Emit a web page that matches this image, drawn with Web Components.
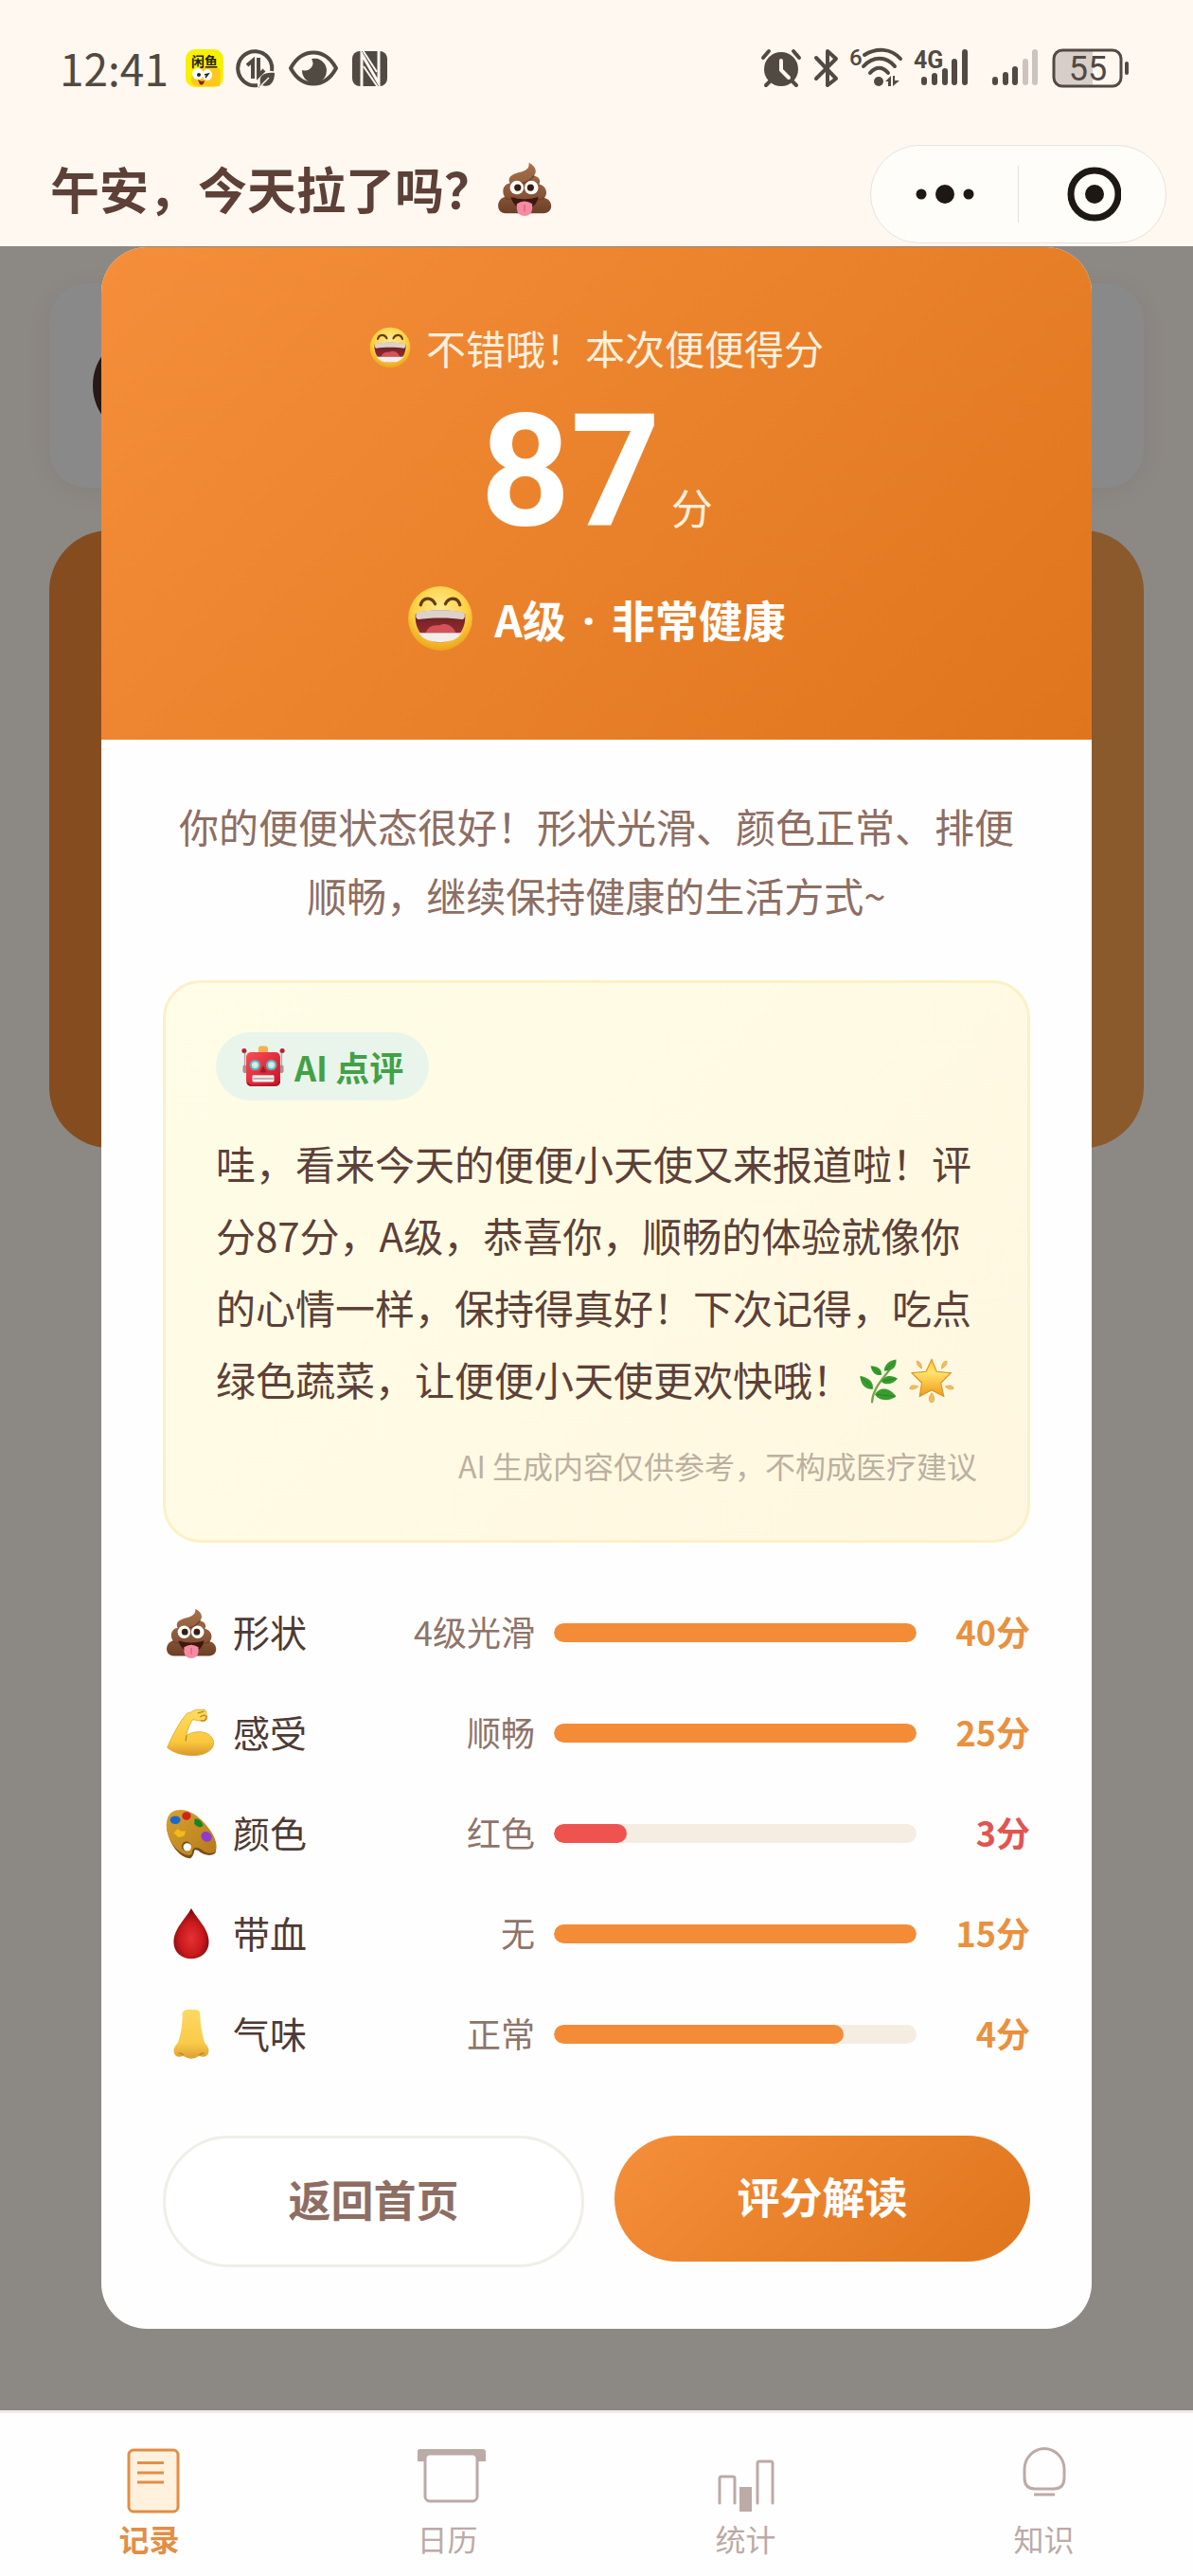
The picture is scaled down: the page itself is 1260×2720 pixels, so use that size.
<!DOCTYPE html>
<html lang="zh-CN">
<head>
<meta charset="utf-8">
<meta name="viewport" content="width=device-width, initial-scale=1">
<title>便便记录</title>
<style>
  body {
    margin: 0;
    background: #fff8f1;
    color: #5d4037;
    font-family: "Noto Sans CJK SC", "Noto Sans", sans-serif;
  }
</style>
</head>
<body>
<health-app></health-app>

<script>
// Emoji artwork, all on a 64x64 canvas
const EMOJI = {
  poop: `
    <defs><linearGradient id="g" x1="0" y1="0" x2="0" y2="1">
      <stop offset="0" stop-color="#a9714b"/><stop offset=".6" stop-color="#8a5839"/><stop offset="1" stop-color="#6b3f27"/>
    </linearGradient></defs>
    <path fill="url(#g)" d="M10 61C-2 61-1 44 9 42C4 34 9 26 15 26C11 18 19 15 27 13C34 11 38 8 37 2C45 6 47 12 43 17C50 19 51 23 49 27C57 29 60 37 55 43C66 45 66 61 54 61Z"/>
    <path fill="none" stroke="#6d4029" stroke-width="1.5" d="M16 26C25 28 37 26 43 17M9 43C14 46 18 45 21 42M55 43C51 46 48 46 45 43"/>
    <circle cx="23" cy="31" r="8" fill="#fff"/><circle cx="40" cy="31" r="8" fill="#fff"/>
    <circle cx="24" cy="31" r="4" fill="#3a1d12"/><circle cx="39" cy="31" r="4" fill="#3a1d12"/>
    <path fill="#43150f" d="M16 42Q32 47 48 42Q46 55 32 56Q19 55 16 42Z"/>
    <path fill="#f58ba2" d="M23 50Q32 44 41 50V56Q40 64 32 64Q24 64 23 56Z"/>
    <path stroke="#d75f7f" stroke-width="1.5" d="M32 51V59"/>`,
  grin: `
    <defs><radialGradient id="g" cx=".5" cy=".35" r=".65">
      <stop offset="0" stop-color="#ffeb8f"/><stop offset=".65" stop-color="#fcd043"/><stop offset="1" stop-color="#eda21a"/>
    </radialGradient>
    <linearGradient id="m" x1="0" y1="0" x2="0" y2="1"><stop offset="0" stop-color="#631f20"/><stop offset="1" stop-color="#a72f36"/></linearGradient></defs>
    <circle cx="32" cy="32" r="31" fill="url(#g)"/>
    <path fill="none" stroke="#643b12" stroke-width="3" stroke-linecap="round" d="M13 19C15 11 24 11 27 18M37 18C40 11 49 11 51 19"/>
    <path fill="url(#m)" d="M8 28C15 23 49 23 56 28C57 43 48 55 32 55C16 55 7 43 8 28Z"/>
    <path fill="#ddd2cb" d="M9 27C16 23 48 23 55 27C57 30 55 33 53 33C44 31 20 31 11 33C8 32 8 30 9 27Z"/>
    <path fill="#d2535b" d="M18 46C22 36 30 40 33 38C40 36 45 41 47 46Z"/>
    <path fill="#f3eeea" d="M11 46H53Q47 55 32 55Q17 55 11 46Z"/>`,
  robot: `
    <defs><linearGradient id="g" x1="0" y1="0" x2="1" y2="1">
      <stop offset="0" stop-color="#fa4e55"/><stop offset="1" stop-color="#c91028"/>
    </linearGradient></defs>
    <path stroke="#b5a3a6" stroke-width="2" d="M5 12V32M59 12V32"/>
    <circle cx="4" cy="9" r="3.500" fill="#b92232"/><circle cx="60" cy="9" r="3.500" fill="#b92232"/>
    <rect x="2" y="30" width="6" height="12" rx="3" fill="#a8929b"/><rect x="56" y="30" width="6" height="12" rx="3" fill="#a8929b"/>
    <path fill="#f5b04c" d="M25 12V6Q25 2 29 2H35Q39 2 39 6V12Z"/>
    <rect x="7" y="11" width="50" height="50" rx="7" fill="url(#g)"/>
    <path fill="none" stroke="#9c1020" stroke-width="2" d="M9 56Q10 60 15 60H50Q55 60 56 54"/>
    <circle cx="20" cy="30" r="8" fill="#68acbc"/><circle cx="44" cy="30" r="8" fill="#68acbc"/>
    <circle cx="20" cy="30" r="5" fill="#bdf0e8"/><circle cx="44" cy="30" r="5" fill="#bdf0e8"/>
    <circle cx="20" cy="30" r="2" fill="#f7eeb1"/><circle cx="44" cy="30" r="2" fill="#f7eeb1"/>
    <path fill="#a91a1f" d="M32 31L37 41H27Z"/>
    <rect x="16" y="45" width="32" height="10" rx="2" fill="#f6eeee"/>
    <path stroke="#b49b9f" stroke-width="2" d="M17 50H47"/>`,
  herb: `
    <path fill="none" stroke="#75a449" stroke-width="3" stroke-linecap="round" d="M20 62C21 43 34 31 45 16"/>
    <g fill="#399d2d">
      <path d="M37 18C37 9 45 3 54 2C55 13 48 19 37 18Z"/>
      <path d="M33 24C24 25 20 20 18 11C28 11 35 16 33 24Z"/>
      <path d="M33 33C37 24 48 23 56 29C49 37 39 39 33 33Z"/>
      <path d="M21 44C9 44 4 36 3 25C14 27 23 33 21 44Z"/>
      <path d="M24 51C31 40 44 41 54 54C45 61 30 61 24 51Z"/>
    </g>
    <path fill="none" stroke="#247823" d="M5 27L20 42M26 51L52 54M20 13L32 23M36 32L53 29M39 17L53 4"/>`,
  star: `
    <defs><linearGradient id="g" x1="0" y1="0" x2="0" y2="1">
      <stop offset="0" stop-color="#ffc62e"/><stop offset=".35" stop-color="#ffe36b"/><stop offset="1" stop-color="#f09a19"/>
    </linearGradient></defs>
    <path fill="url(#g)" stroke="#dc921f" stroke-width="1.500" d="M32 2L39 19L59 21L45 35L49 54L32 45L15 54L18 35L4 21L24 19Z"/>
    <g fill="#f3bd5b" stroke="#dda23d">
      <path d="M18 15Q10 10 11 4Q18 5 18 15ZM46 15Q46 5 53 4Q55 10 46 15Z"/>
      <path d="M13 40Q7 46 1 43Q2 36 13 40ZM51 40Q61 36 63 43Q57 46 51 40Z"/>
      <path d="M32 49Q38 57 34 62H30Q26 57 32 49Z"/>
    </g>`,
  arm: `
    <defs><linearGradient id="g" x1="0" y1="0" x2="0" y2="1">
      <stop offset="0" stop-color="#ffdc5e"/><stop offset=".7" stop-color="#fbc83d"/><stop offset="1" stop-color="#d8982b"/>
    </linearGradient></defs>
    <path fill="url(#g)" stroke="#dfa32e" d="M2 50C8 36 17 18 27 7C33 7 35 1 44 3C50 1 51 5 51 9C54 14 50 18 45 17L34 15C31 19 27 27 26 35C36 28 57 28 60 43C61 53 49 60 35 60C22 60 10 57 2 50Z"/>
    <path fill="none" stroke="#b78320" stroke-width="1.500" d="M26 35L25 42M40 7L48 5M43 12Q49 7 51 12Q50 18 44 16"/>`,
  palette: `
    <defs><linearGradient id="g" x1="0" y1="0" x2="1" y2="1">
      <stop offset="0" stop-color="#d9a130"/><stop offset="1" stop-color="#b47a1c"/>
    </linearGradient></defs>
    <path fill="#765017" d="M1 21C2 43 17 63 31 63Q35 60 36 53Q39 51 44 56Q54 62 62 57Q67 43 50 25Q33 8 13 6Z"/>
    <path fill="url(#g)" d="M8 5C22-3 41 8 52 23C63 36 67 51 60 56Q52 58 45 52Q36 46 33 54Q34 60 27 59C13 56 0 37 1 19Q2 9 8 5Z"/>
    <ellipse cx="26" cy="48" rx="6" ry="6" fill="#765017"/>
    <ellipse cx="27" cy="49" rx="5" ry="5" fill="#fff"/>
    <ellipse cx="12" cy="15" rx="6.500" ry="5" fill="#1769cf"/>
    <ellipse cx="26" cy="10" rx="5.500" ry="5" fill="#cf231b"/>
    <path fill="#168522" d="M36 14Q43 12 47 22Q43 27 36 20Z"/>
    <ellipse cx="51" cy="36" rx="7" ry="6" transform="rotate(35 51 36)" fill="#913ad0"/>
    <path fill="#f3bb1a" d="M10 31L15 26L19 29L25 29L23 35L16 37Z"/>`,
  drop: `
    <defs><radialGradient id="g" cx=".5" cy=".6" r=".6">
      <stop offset="0" stop-color="#e33332"/><stop offset=".55" stop-color="#ca191d"/><stop offset="1" stop-color="#6e080b"/>
    </radialGradient></defs>
    <path fill="url(#g)" d="M32 0C38 12 54 25 54 42C54 55 44 63 32 63C20 63 10 55 10 42C10 25 26 12 32 0Z"/>`,
  nose: `
    <defs><linearGradient id="g" x1="0" y1="0" x2="0" y2="1">
      <stop offset="0" stop-color="#ffd861"/><stop offset=".7" stop-color="#f8ca48"/><stop offset="1" stop-color="#dc9d33"/>
    </linearGradient></defs>
    <path fill="url(#g)" d="M21 5Q22 1 32 1Q42 1 43 5C43 20 46 34 49 43Q57 51 52 58Q47 62 42 59Q32 66 22 59Q16 62 12 58Q7 51 15 43C19 33 21 20 21 5Z"/>
    <path fill="none" stroke="#bd8124" stroke-width="1.500" d="M16 56Q20 55 22 58M42 58Q45 55 48 56"/>`,
};

class EmojiIcon extends HTMLElement {
  connectedCallback() {
    this.attachShadow({ mode: "open" });
    this.shadowRoot.innerHTML = `
      <style>
        :host { display: inline-block; flex: none; width: var(--emoji-size, 1em); height: var(--emoji-size, 1em); }
        svg { display: block; width: 100%; height: 100%; }
      </style>
      <svg viewBox="0 0 64 64" aria-hidden="true">${EMOJI[this.getAttribute("name")]}</svg>
    `;
  }
}
customElements.define("emoji-icon", EmojiIcon);

class StatusBar extends HTMLElement {
  connectedCallback() {
    this.attachShadow({ mode: "open" });
    this.shadowRoot.innerHTML = `
      <style>
        :host {
          display: flex;
          justify-content: space-between;
          align-items: center;
          height: 144px;
          padding: 0 68px 0 63px;
          color: #514942;
        }
        .group { display: flex; align-items: center; }
        .left { gap: 14px; }
        .time { font-size: 46px; line-height: 48px; margin: 0 4px 3px 0; }
        svg { display: block; height: 44px; fill: currentColor; overflow: visible; }
        text { font-family: Roboto, "Noto Sans CJK SC", sans-serif; }
      </style>
      <div class="group left">
        <span class="time">12:41</span>
        <svg width="40" viewBox="0 0 40 44">
          <rect y="2" width="40" height="40" rx="10" fill="#f7f000"/>
          <path fill="#fbc91d" d="M6 32Q10 20 22 21Q31 18 37 24L36 41H12Q5 40 6 32Z"/>
          <ellipse cx="13" cy="28" rx="6" ry="6" fill="#fff"/><ellipse cx="23" cy="29" rx="5" ry="6" fill="#fff"/>
          <circle cx="14" cy="29" r="2" fill="#222"/>
          <path d="M20 29L24 28L21 32" fill="none" stroke="#222" stroke-width="1.500"/>
          <path d="M13 34Q17 37 20 35Q19 41 15 39Z" fill="#8c1d18"/>
          <text x="6" y="20" font-size="14" font-weight="700" fill="#24220a">闲鱼</text>
        </svg>
        <svg width="40" viewBox="0 0 40 44">
          <path fill="none" stroke="currentColor" stroke-width="4" d="M22 40A18 18 0 1 1 37 25"/>
          <path fill="none" stroke="currentColor" stroke-width="4" d="M11 19L17 14V33M23 11V30L29 24"/>
          <path d="M25 38C23 29 30 26 40 27C40 38 34 43 27 40L23 43Z"/>
          <path stroke="#fff8f1" stroke-width="1.500" d="M24 42L34 32"/>
        </svg>
        <svg width="54" viewBox="0 0 54 44">
          <path fill="none" stroke="currentColor" stroke-width="4" stroke-linejoin="round" d="M3 22C15 0 39 0 51 22C39 44 15 44 3 22Z"/>
          <path d="M25 12A13 13 0 1 1 15 24Q21 26 25 21Q28 17 25 12Z"/>
        </svg>
        <svg width="38" viewBox="0 0 38 44">
          <rect y="4" width="37" height="37" rx="8"/>
          <path d="M10 42V7L28 38V3" fill="none" stroke="#fff8f1" stroke-width="3"/>
          <path d="M11 3L26 26M12 20L27 42" fill="none" stroke="#fff8f1" stroke-width="2"/>
        </svg>
      </div>
      <div class="group right">
        <svg width="42" viewBox="0 0 42 44">
          <circle cx="21" cy="23" r="18"/>
          <path fill="none" stroke="currentColor" stroke-width="4" stroke-linecap="round" d="M2 11L8 4M34 4L40 11M9 36L5 40M33 36L37 40"/>
          <path fill="none" stroke="#fff8f1" stroke-width="4" stroke-linecap="round" stroke-linejoin="round" d="M21 14V24L29 32"/>
        </svg>
        <svg width="50" viewBox="0 0 50 44">
          <path fill="none" stroke="currentColor" stroke-width="4" stroke-linecap="round" stroke-linejoin="round" d="M16 11L37 33L28 40V4L37 12L16 33"/>
        </svg>
        <svg width="60" viewBox="0 0 60 44">
          <text x="1" y="19" font-size="24" font-weight="500">6</text>
          <g fill="none" stroke="currentColor" stroke-width="4" stroke-linecap="round">
            <path d="M17 8C30 0 45 1 55 12M16 20C26 9 40 9 49 20M23 27C29 20 36 20 42 27"/>
          </g>
          <circle cx="32" cy="36" r="5"/>
          <path d="M39 36L45 30V41H42V36ZM47 30H49V35H54L47 41Z"/>
        </svg>
        <svg width="92" viewBox="0 0 92 44">
          <text x="9" y="22" font-size="25" font-weight="700">4G</text>
          <g stroke="currentColor" stroke-width="6" stroke-linecap="round">
            <path d="M20 34V37M31 30V37M42 25V37M52 15V37M63 5V37"/>
          </g>
        </svg>
        <svg width="60" viewBox="0 0 60 44">
          <g stroke="currentColor" stroke-width="6" stroke-linecap="round">
            <path d="M3 34V37M14 29V37M24 23V37"/>
            <path stroke="#ccc3be" d="M35 15V37M45 5V37"/>
          </g>
        </svg>
        <svg width="84" viewBox="0 0 84 44">
          <path fill="#d8cec9" d="M13 3H46V41H13Q5 41 5 34V10Q5 3 13 3Z"/>
          <rect x="5" y="3" width="71" height="38" rx="9" fill="none" stroke="currentColor" stroke-width="3"/>
          <rect x="80" y="15" width="4" height="14" rx="2"/>
          <text x="41" y="35" font-size="36" text-anchor="middle">55</text>
        </svg>
      </div>
    `;
  }
}
customElements.define("status-bar", StatusBar);

class PageHeader extends HTMLElement {
  connectedCallback() {
    this.attachShadow({ mode: "open" });
    this.shadowRoot.innerHTML = `
      <style>
        :host {
          display: flex;
          justify-content: space-between;
          align-items: center;
          padding: 9px 28px 3px 53px;
        }
        h1 {
          display: flex;
          align-items: center;
          gap: 4px;
          margin: 0 0 12px;
          font-size: 52px;
          line-height: 76px;
          font-weight: 700;
          --emoji-size: 58px;
        }
        .capsule {
          display: flex;
          align-items: center;
          box-sizing: border-box;
          width: 313px;
          height: 104px;
          border: 1px solid #eae1da;
          border-radius: 52px;
          background: #fffdf9;
        }
        button {
          flex: 1;
          height: 60px;
          padding: 0;
          border: 0;
          background: none;
        }
        button + button { border-left: 1px solid #e3ded9; }
        svg { display: block; margin: auto; fill: #1d1814; }
      </style>
      <h1><slot></slot></h1>
      <div class="capsule">
        <button aria-label="更多">
          <svg width="64" height="60" viewBox="0 0 64 60">
            <circle cx="7" cy="30" r="5.500"/><circle cx="32" cy="30" r="10"/><circle cx="57" cy="30" r="5.500"/>
          </svg>
        </button>
        <button aria-label="关闭">
          <svg width="60" height="60" viewBox="0 0 60 60">
            <circle cx="32" cy="30" r="25" fill="none" stroke="#1d1814" stroke-width="7"/><circle cx="32" cy="30" r="10"/>
          </svg>
        </button>
      </div>
    `;
  }
}
customElements.define("page-header", PageHeader);

// The record page as it shows through behind the dialog
class RecordPage extends HTMLElement {
  connectedCallback() {
    this.attachShadow({ mode: "open" });
    this.shadowRoot.innerHTML = `
      <style>
        :host { display: block; padding: 39px 52px; }
        .profile {
          display: flex;
          align-items: center;
          height: 216px;
          padding-left: 46px;
          border-radius: 40px;
          background: #f9fafc;
          box-shadow: 0 4px 24px rgba(93, 64, 55, .08);
        }
        .avatar { width: 112px; height: 112px; border-radius: 50%; background: #4b2d24; }
        .today {
          height: 652px;
          margin-top: 45px;
          border-radius: 64px;
          background: linear-gradient(90deg, #f28b39, #fca553);
        }
      </style>
      <div class="profile"><div class="avatar"></div></div>
      <div class="today"></div>
    `;
  }
}
customElements.define("record-page", RecordPage);

class ScoreBanner extends HTMLElement {
  connectedCallback() {
    this.attachShadow({ mode: "open" });
    this.shadowRoot.innerHTML = `
      <style>
        :host {
          display: flex;
          flex-direction: column;
          align-items: center;
          padding: 77px 64px 93px;
          background: linear-gradient(135deg, #f58e3a, #df761d);
          color: #fff;
        }
        .caption {
          display: flex;
          align-items: center;
          gap: 16px;
          font-size: 42px;
          line-height: 58px;
          color: #fff0de;
          --emoji-size: 44px;
        }
        .score {
          display: flex;
          align-items: baseline;
          gap: 11px;
          height: 160px;
          margin: 22px 0 40px;
        }
        strong { font-family: Roboto, sans-serif; font-size: 166px; line-height: 160px; font-weight: 700; }
        .unit { font-size: 44px; line-height: 44px; color: #fff0de; }
        .grade {
          display: flex;
          align-items: center;
          gap: 22px;
          font-size: 46px;
          line-height: 70px;
          font-weight: 700;
          --emoji-size: 70px;
        }
      </style>
      <div class="caption"><emoji-icon name="grin"></emoji-icon><slot name="caption"></slot></div>
      <div class="score"><strong>${this.getAttribute("score")}</strong><span class="unit">分</span></div>
      <div class="grade"><emoji-icon name="grin"></emoji-icon><slot name="grade"></slot></div>
    `;
  }
}
customElements.define("score-banner", ScoreBanner);

class AiReview extends HTMLElement {
  connectedCallback() {
    this.attachShadow({ mode: "open" });
    this.shadowRoot.innerHTML = `
      <style>
        :host {
          display: block;
          padding: 52px 53px 57px;
          border: 3px solid #fbf1c6;
          border-radius: 40px;
          background: linear-gradient(135deg, #fffde7, #fff7e0);
        }
        .badge {
          display: inline-flex;
          align-items: center;
          gap: 10px;
          padding: 0 27px;
          border-radius: 36px;
          background: #e9f5ea;
          color: #43a047;
          font-size: 36px;
          line-height: 72px;
          font-weight: 700;
          --emoji-size: 46px;
        }
        p { margin: 28px 0 0; font-size: 42px; line-height: 76px; --emoji-size: 48px; }
        ::slotted(emoji-icon) { vertical-align: -8px; margin-left: 6px; }
        small {
          display: block;
          margin-top: 31px;
          font-size: 32px;
          line-height: 44px;
          text-align: right;
          color: #bcb0a0;
        }
      </style>
      <div class="badge"><emoji-icon name="robot"></emoji-icon>AI 点评</div>
      <p><slot></slot></p>
      <small>AI 生成内容仅供参考，不构成医疗建议</small>
    `;
  }
}
customElements.define("ai-review", AiReview);

class ScoreRow extends HTMLElement {
  connectedCallback() {
    const percent = this.getAttribute("percent");
    this.attachShadow({ mode: "open" });
    this.shadowRoot.innerHTML = `
      <style>
        :host {
          --tone: #f48c37;
          --tone-text: #e8913f;
          display: grid;
          grid-template-columns: 60px auto 1fr 383px 106px;
          align-items: center;
          column-gap: 14px;
          line-height: 58px;
          font-size: 36px;
        }
        :host([low]) { --tone: #ef5350; --tone-text: #e05552; }
        emoji-icon { --emoji-size: 54px; justify-self: center; }
        span { padding-bottom: 4px; }
        .name { font-size: 39px; color: #4e3a34; }
        .detail { padding-right: 6px; text-align: right; color: #8d746a; }
        .track { height: 20px; border-radius: 10px; background: #f5ece2; overflow: hidden; }
        .fill { height: 100%; width: ${percent}%; border-radius: 10px; background: var(--tone); }
        .points { text-align: right; font-weight: 700; color: var(--tone-text); }
      </style>
      <emoji-icon name="${this.getAttribute("icon")}"></emoji-icon>
      <span class="name">${this.getAttribute("name")}</span>
      <span class="detail">${this.getAttribute("detail")}</span>
      <div class="track"><div class="fill"></div></div>
      <span class="points">${this.getAttribute("points")}分</span>
    `;
  }
}
customElements.define("score-row", ScoreRow);

class PillButton extends HTMLElement {
  connectedCallback() {
    this.attachShadow({ mode: "open" });
    this.shadowRoot.innerHTML = `
      <style>
        /* the outlined button is wider by its two borders */
        :host { display: block; flex: 1 1 6px; }
        :host([primary]) { flex-basis: 0; }
        button {
          display: block;
          width: 100%;
          padding: 30px 0 36px;
          border: 3px solid #f0eee6;
          border-radius: 70px;
          background: #fff;
          color: #8d6e63;
          font: inherit;
          font-size: 45px;
          line-height: 67px;
          font-weight: 700;
        }
        :host([primary]) button {
          border: 0;
          background: linear-gradient(135deg, #f58e3a, #df761d);
          color: #fff;
        }
      </style>
      <button><slot></slot></button>
    `;
  }
}
customElements.define("pill-button", PillButton);

class ScoreDialog extends HTMLElement {
  connectedCallback() {
    this.attachShadow({ mode: "open" });
    this.shadowRoot.innerHTML = `
      <style>
        :host {
          display: block;
          margin: 1px 107px 86px;
          border-radius: 48px;
          background: #fffefe;
          overflow: hidden;
        }
        .dot { margin: 0 7px; font-family: "Noto Sans", sans-serif; line-height: 1; }
        .body { padding: 54px 65px 65px; }
        .summary {
          margin: 0 0 54px;
          font-size: 42px;
          line-height: 73px;
          text-align: center;
          color: #8d6e63;
        }
        .rows { display: grid; gap: 44px; margin: 64px 0 76px; }
        .actions { display: flex; align-items: flex-start; gap: 32px; }
      </style>
      <score-banner score="87">
        <span slot="caption">不错哦！本次便便得分</span>
        <span slot="grade">A级 <span class="dot">·</span> 非常健康</span>
      </score-banner>
      <div class="body">
        <p class="summary">你的便便状态很好！形状光滑、颜色正常、排便顺畅，继续保持健康的生活方式~</p>
        <ai-review>哇，看来今天的便便小天使又来报道啦！评分87分，A级，恭喜你，顺畅的体验就像你的心情一样，保持得真好！下次记得，吃点绿色蔬菜，让便便小天使更欢快哦！<emoji-icon name="herb"></emoji-icon><emoji-icon name="star"></emoji-icon></ai-review>
        <div class="rows">
          <score-row icon="poop" name="形状" detail="4级光滑" points="40" percent="100"></score-row>
          <score-row icon="arm" name="感受" detail="顺畅" points="25" percent="100"></score-row>
          <score-row icon="palette" name="颜色" detail="红色" points="3" percent="20" low></score-row>
          <score-row icon="drop" name="带血" detail="无" points="15" percent="100"></score-row>
          <score-row icon="nose" name="气味" detail="正常" points="4" percent="80"></score-row>
        </div>
        <div class="actions">
          <pill-button>返回首页</pill-button>
          <pill-button primary>评分解读</pill-button>
        </div>
      </div>
    `;
  }
}
customElements.define("score-dialog", ScoreDialog);

const TAB_ICONS = {
  record: `
    <rect x="20" y="5" width="52" height="65" rx="5" fill="#fff1de" stroke="currentColor" stroke-width="3"/>
    <path stroke="currentColor" stroke-width="3" d="M29 18.500H57M29 29H57M29 39H57"/>`,
  calendar: `
    <path fill="currentColor" d="M12 4H79Q82 4 82 7V17H10V7Q10 4 12 4Z"/>
    <rect x="18" y="9" width="55" height="50" rx="5" fill="#fffefe" stroke="currentColor" stroke-width="3"/>`,
  stats: `
    <path fill="none" stroke="currentColor" stroke-width="3" stroke-linecap="round" d="M14 61V35Q14 33 16 33H28Q30 33 30 35V61M54 61V19Q54 17 56 17H68Q70 17 70 19V61"/>
    <rect x="35" y="44" width="13" height="26" fill="currentColor"/>`,
  tips: `
    <path fill="none" stroke="currentColor" stroke-width="3" d="M42 3.500C53 3.500 63 13 63 25V34Q63 46 52 46H32Q21 46 21 34V25C21 13 31 3.500 42 3.500Z"/>
    <path stroke="currentColor" stroke-width="3" d="M31 52H53"/>`,
};

class TabItem extends HTMLElement {
  connectedCallback() {
    this.attachShadow({ mode: "open" });
    this.shadowRoot.innerHTML = `
      <style>
        :host { display: block; flex: 1; color: #bcaaa7; }
        :host([active]) { color: #e28e45; font-weight: 700; }
        a {
          display: flex;
          flex-direction: column;
          align-items: center;
          gap: 6px;
          padding: 34px 0 20px;
          color: inherit;
          font-size: 32px;
          line-height: 40px;
          text-decoration: none;
        }
        svg { display: block; width: 84px; height: 72px; }
      </style>
      <a href="#${this.getAttribute("icon")}">
        <svg viewBox="0 0 84 72" aria-hidden="true">${TAB_ICONS[this.getAttribute("icon")]}</svg>
        <slot></slot>
      </a>
    `;
  }
}
customElements.define("tab-item", TabItem);

class HealthApp extends HTMLElement {
  connectedCallback() {
    this.attachShadow({ mode: "open" });
    this.shadowRoot.innerHTML = `
      <style>
        :host { display: flex; flex-direction: column; min-height: 100vh; }
        /* page and overlay share one grid cell */
        main { flex: 1; display: grid; }
        record-page, .overlay { grid-area: 1 / 1; min-width: 0; }
        .overlay { position: relative; background: rgba(0, 0, 0, .45); }
        nav { display: flex; border-top: 3px solid #f3e9e4; background: #fffefe; }
      </style>
      <header>
        <status-bar></status-bar>
        <page-header>午安，今天拉了吗？<emoji-icon name="poop"></emoji-icon></page-header>
      </header>
      <main>
        <record-page></record-page>
        <div class="overlay"><score-dialog></score-dialog></div>
      </main>
      <nav>
        <tab-item icon="record" active>记录</tab-item>
        <tab-item icon="calendar">日历</tab-item>
        <tab-item icon="stats">统计</tab-item>
        <tab-item icon="tips">知识</tab-item>
      </nav>
    `;
  }
}
customElements.define("health-app", HealthApp);
</script>
</body>
</html>
